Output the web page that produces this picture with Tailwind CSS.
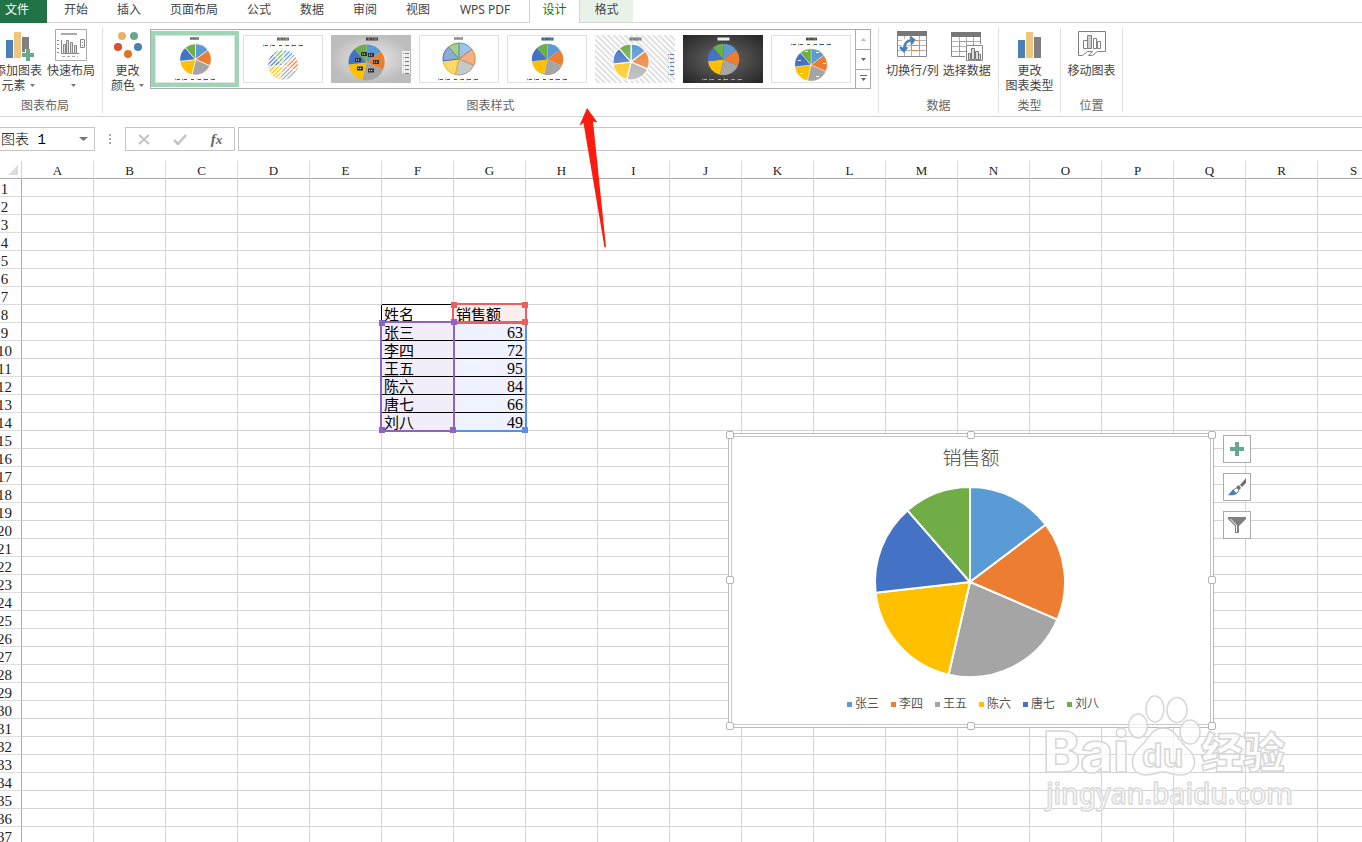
<!DOCTYPE html>
<html lang="zh-CN">
<head>
<meta charset="utf-8">
<title>图表工具</title>
<script src="https://cdn.jsdelivr.net/npm/@tailwindcss/browser@4"></script>
</head>
<body class="bg-white">
<!-- Shared drawing parts -->
<svg class="absolute size-0" aria-hidden="true">
  <defs>
    <symbol id="pie" viewBox="-100 -100 200 200">
      <path fill="#5b9bd5" d="M0 0V-95A95 95 0 0 1 75.7-57.3Z"/>
      <path fill="#ed7d31" d="M0 0L75.7-57.3A95 95 0 0 1 87.3 37.6Z"/>
      <path fill="#a5a5a5" d="M0 0L87.3 37.6A95 95 0 0 1-21.4 92.6Z"/>
      <path fill="#ffc000" d="M0 0L-21.4 92.6A95 95 0 0 1-94.4 10.8Z"/>
      <path fill="#4472c4" d="M0 0L-94.4 10.8A95 95 0 0 1-62.5-71.6Z"/>
      <path fill="#70ad47" d="M0 0L-62.5-71.6A95 95 0 0 1 0-95Z"/>
    </symbol>
    <symbol id="title" viewBox="0 0 12 4"><path d="M0 2h12" stroke-width="3"/><path d="M2 2h2M6 2h1M8 2h3" stroke="#fff" stroke-opacity=".45" stroke-width="1"/></symbol>
    <symbol id="legend" viewBox="0 0 42 3">
      <path d="M2 1.500h3M9 1.500h3M16 1.500h3M23 1.500h3M30 1.500h3M37 1.500h3" stroke-width="1.200"/>
      <path d="M0 1.500h1.500" stroke="#5b9bd5" stroke-width="1.500"/><path d="M7 1.500h1.500" stroke="#ed7d31" stroke-width="1.500"/><path d="M21.500 1.500h1.500" stroke="#ffc000" stroke-width="1.500"/><path d="M28.500 1.500h1.500" stroke="#4472c4" stroke-width="1.500"/><path d="M35.500 1.500h1.500" stroke="#70ad47" stroke-width="1.500"/>
    </symbol>
    <symbol id="vlegend" viewBox="0 0 6 24"><path d="M2 2.500h4M2 6.500h4M2 10.500h4M2 14.500h4M2 18.500h4M2 22.500h4" stroke="#5f7ba5"/><path d="M0 2.500h1M0 14.500h1" stroke="#5b9bd5"/><path d="M0 6.500h1" stroke="#ed7d31"/><path d="M0 22.500h1" stroke="#70ad47"/></symbol>
    <pattern id="hatch" width="3" height="3" patternUnits="userSpaceOnUse" patternTransform="rotate(45)"><path d="M1 0V3" stroke="#fff" stroke-width="1.800"/></pattern>
    <pattern id="hatchbg" width="4" height="4" patternUnits="userSpaceOnUse" patternTransform="rotate(-45)"><path d="M1 0V4" stroke="#d9d9d9" stroke-width="1.600"/></pattern>
    <radialGradient id="light"><stop offset="0" stop-color="#ececec"/><stop offset="1" stop-color="#bdbdbd"/></radialGradient>
    <radialGradient id="dark" r=".7"><stop offset="0" stop-color="#6a6a6a"/><stop offset="1" stop-color="#242424"/></radialGradient>
    <linearGradient id="gloss" x2="0" y2="1"><stop offset="0" stop-color="#fff" stop-opacity="0"/><stop offset="1" stop-color="#fff" stop-opacity=".35"/></linearGradient>
    <symbol id="bars" viewBox="0 0 24 26"><path fill="#4a80b8" d="M0 8h7v18H0z"/><path fill="#eec77c" d="M8 0h7v26H8z"/><path fill="#808080" d="M16 5h7v21h-7z"/></symbol>
  </defs>
</svg>

<div class="relative flex h-screen flex-col overflow-hidden font-['Noto_Sans','Noto_Sans_CJK_SC',sans-serif] text-xs text-[#444]">

  <nav class="flex h-[23px] shrink-0 leading-4">
    <button class="w-[47px] bg-[#217346] pb-[3px] pl-[5px] text-left text-white">文件</button>
    <div class="flex gap-px border-b border-[#d4d4d4] pl-[3px]">
      <button class="px-[14px] pb-[3px]">开始</button>
      <button class="px-[14px] pb-[3px]">插入</button>
      <button class="px-[14px] pb-[3px]">页面布局</button>
      <button class="px-[14px] pb-[3px]">公式</button>
      <button class="px-[14px] pb-[3px]">数据</button>
      <button class="px-[14px] pb-[3px]">审阅</button>
      <button class="px-[14px] pb-[3px]">视图</button>
      <button class="w-[84px] pr-1 pb-[3px]">WPS PDF</button>
    </div>
    <button class="w-[51px] border-x border-[#d4d4d4] pb-[3px] text-[#0b7a0b]">设计</button>
    <button class="w-[53px] border-b border-[#d4d4d4] bg-[#e8f2e8] pb-[3px]">格式</button>
    <div class="flex-1 border-b border-[#d4d4d4]"></div>
  </nav>

  <section class="flex h-[94px] shrink-0 border-b border-[#d4d4d4] pt-1 pb-[3px] leading-[15px]">
    <div class="flex w-[103px] flex-col justify-between border-r border-[#e1e1e1]">
      <div class="-ml-[6px] flex gap-[5px]">
        <button class="flex w-12 shrink-0 flex-col items-center whitespace-nowrap">
          <svg class="mt-[2px] mb-[2px] ml-1 h-8 w-[30px]" viewBox="0 0 30 32"><path fill="#4a80b8" d="M1 11h7v18H1z"/><path fill="#eec77c" d="M9 3h7v26H9z"/><path fill="#808080" d="M17 8h7v21h-7z"/><path d="M23 20v12M17 26h12" stroke="#fff" stroke-width="6"/><path d="M23 20v12M17 26h12" stroke="#6aa793" stroke-width="4"/></svg>
          <span>添加图表</span>
          <span class="flex items-center gap-1">元素<svg class="h-[3px] w-[5px]" viewBox="0 0 5 3"><path d="M0 0h5L2.500 3z" fill="#777"/></svg></span>
        </button>
        <button class="flex w-12 flex-col items-center whitespace-nowrap">
          <svg class="mt-[2px] mb-[2px] h-8 w-8" viewBox="0 0 32 32" fill="none" stroke="#888"><path stroke="#aaa" d="M.5.5h31v31H.5z"/><path stroke-width="2" stroke="#aaa" d="M6 5h16"/><path d="M6.500 11v14M6 24.500h18"/><path fill="#ddd" d="M8.500 15.500h2v9h-2zM11.500 11.500h2v13h-2zM15.500 13.500h2v11h-2zM19.500 16.500h2v8h-2z"/><path fill="#fff" d="M25.500 10.500h4v8h-4z"/><path d="M2 11.500h2M2 15.500h2M2 19.500h2M2 23.500h2M27 13.500h1M27 16.500h1"/><path stroke="#aaa" stroke-dasharray="3 2" d="M7 27.500h16"/></svg>
          <span>快速布局</span>
          <svg class="mt-[6px] ml-1 h-[3px] w-[5px]" viewBox="0 0 5 3"><path d="M0 0h5L2.500 3z" fill="#777"/></svg>
        </button>
      </div>
      <h2 class="pr-3 text-center text-[#666]">图表布局</h2>
    </div>

    <div class="flex w-[776px] flex-col justify-between border-r border-[#e1e1e1]">
      <div class="flex">
        <button class="flex w-[47px] flex-col items-center pl-[2px]">
          <svg class="mt-[2px] mb-[2px] h-8 w-7" viewBox="0 0 28 32"><circle cx="8" cy="7" r="4" fill="#e9b565"/><circle cx="20" cy="7" r="4" fill="#6aa793"/><circle cx="4" cy="18" r="4" fill="#d35230"/><circle cx="24" cy="18" r="4" fill="#4a80b8"/><circle cx="14" cy="25" r="4" fill="#e3731c"/></svg>
          <span>更改</span>
          <span class="flex items-center gap-1">颜色<svg class="h-[3px] w-[5px]" viewBox="0 0 5 3"><path d="M0 0h5L2.500 3z" fill="#777"/></svg></span>
        </button>
        <div class="mt-[2px] flex h-[60px] border border-[#ababab]">
          <div class="flex items-center">
            <button class="w-[88px] border-4 border-[#9fd5b7]" aria-label="样式 1">
              <svg class="h-12 w-20" viewBox="0 0 80 48"><rect x=".5" y=".5" width="79" height="47" fill="#fff" stroke="#e1e1e1"/><use href="#title" x="35" y="2" width="9" height="3" stroke="#555"/><use href="#pie" x="24" y="8" width="33" height="33" stroke="#fff" stroke-width="4"/><use href="#legend" x="20" y="43" width="42" height="3" stroke="#555"/></svg>
            </button>
            <button class="w-[88px] p-1" aria-label="样式 2">
              <svg class="h-12 w-20" viewBox="0 0 80 48"><rect x=".5" y=".5" width="79" height="47" fill="#fff" stroke="#e1e1e1"/><use href="#title" x="33" y="2" width="14" height="4" stroke="#666"/><use href="#legend" x="20" y="9" width="42" height="3" stroke="#555"/><use href="#pie" x="24" y="14" width="32" height="32" stroke="#fff" stroke-width="4"/><circle cx="40" cy="30" r="16" fill="url(#hatch)"/></svg>
            </button>
            <button class="w-[88px] p-1" aria-label="样式 3">
              <svg class="h-12 w-20" viewBox="0 0 80 48"><path fill="url(#light)" d="M0 0h80v48H0z"/><use href="#title" x="34" y="2" width="14" height="4" stroke="#444"/><use href="#pie" x="16.500" y="8.500" width="38" height="38"/><path d="M30 19h6M37 20h6M24 25h6M42 27h6M26 33.500h6M37 35.500h6" stroke="#333" stroke-width="4"/><path d="M31 19h4M38 20h4M25 25h4M43 27h4M27 33.500h4M38 35.500h4" stroke="#eee" stroke-dasharray="1 1"/><path fill="#eee" d="M71 16h8v23h-8z"/><use href="#vlegend" x="72" y="16" width="6" height="24"/></svg>
            </button>
            <button class="w-[88px] p-1" aria-label="样式 4">
              <svg class="h-12 w-20" viewBox="0 0 80 48"><rect x=".5" y=".5" width="79" height="47" fill="#fff" stroke="#e1e1e1"/><use href="#title" x="35" y="2" width="9" height="3" stroke="#777"/><use href="#pie" x="23" y="7" width="34" height="34" opacity=".6"/><g fill="none"><path stroke="#5b9bd5" d="M40 24V8A16 16 0 0 1 52.800 14.400Z"/><path stroke="#ed7d31" d="M40 24L52.800 14.400A16 16 0 0 1 54.700 30.300Z"/><path stroke="#a5a5a5" d="M40 24L54.700 30.300A16 16 0 0 1 36.400 39.600Z"/><path stroke="#f0b428" d="M40 24L36.400 39.600A16 16 0 0 1 24.100 25.800Z"/><path stroke="#4472c4" d="M40 24L24.100 25.800A16 16 0 0 1 29.500 12Z"/><path stroke="#70ad47" d="M40 24L29.500 12A16 16 0 0 1 40 8Z"/></g><use href="#legend" x="19" y="43" width="42" height="3" stroke="#555"/></svg>
            </button>
            <button class="w-[88px] p-1" aria-label="样式 5">
              <svg class="h-12 w-20" viewBox="0 0 80 48"><rect x=".5" y=".5" width="79" height="47" fill="#fff" stroke="#e1e1e1"/><use href="#title" x="34" y="2" width="13" height="4" stroke="#355a86"/><use href="#pie" x="24" y="8" width="33" height="33"/><use href="#legend" x="20" y="43" width="42" height="3" stroke="#355a86"/></svg>
            </button>
            <button class="w-[88px] p-1" aria-label="样式 6">
              <svg class="h-12 w-20" viewBox="0 0 80 48"><path fill="#fff" d="M0 0h80v48H0z"/><path fill="url(#hatchbg)" d="M0 0h80v48H0z"/><use href="#title" x="34" y="2" width="13" height="4" stroke="#777"/><use href="#pie" x="17" y="8" width="38" height="38" stroke="#fff" stroke-width="6"/><circle cx="36" cy="27" r="18" fill="url(#gloss)"/><use href="#vlegend" x="73" y="17" width="6" height="24"/></svg>
            </button>
            <button class="w-[88px] p-1" aria-label="样式 7">
              <svg class="h-12 w-20" viewBox="0 0 80 48"><path fill="url(#dark)" d="M0 0h80v48H0z"/><use href="#title" x="34" y="2" width="13" height="4" stroke="#eee"/><use href="#pie" x="24" y="8" width="33" height="33"/><use href="#legend" x="19" y="43" width="42" height="3" stroke="#aaa"/></svg>
            </button>
            <button class="w-[88px] p-1" aria-label="样式 8">
              <svg class="h-12 w-20" viewBox="0 0 80 48"><rect x=".5" y=".5" width="79" height="47" fill="#fff" stroke="#e1e1e1"/><use href="#title" x="35" y="2" width="11" height="4" stroke="#444"/><use href="#legend" x="20" y="8" width="42" height="3" stroke="#355a86"/><use href="#pie" x="23" y="13" width="34" height="34" stroke="#fff" stroke-width="2"/><path d="M45 17.500h3M52 28.500h3M45 41.500h3M29 38.500h3M27 25.500h3M34 16.500h3" stroke="#fff" stroke-width="1"/></svg>
            </button>
          </div>
          <div class="flex w-[15px] flex-col divide-y divide-[#ababab] border-l border-[#ababab]">
            <button class="flex h-5 items-center justify-center" aria-label="上一行"><svg class="h-[3px] w-[5px]" viewBox="0 0 5 3"><path d="M0 3h5L2.500 0z" fill="#bbb"/></svg></button>
            <button class="flex flex-1 items-center justify-center" aria-label="下一行"><svg class="h-[3px] w-[5px]" viewBox="0 0 5 3"><path d="M0 0h5L2.500 3z" fill="#666"/></svg></button>
            <button class="flex flex-1 items-center justify-center" aria-label="其他样式"><svg class="h-[7px] w-[7px]" viewBox="0 0 7 7"><path d="M0 0h7v1H0zM1 3h5L3.500 6z" fill="#666"/></svg></button>
          </div>
        </div>
      </div>
      <h2 class="text-center text-[#666]">图表样式</h2>
    </div>

    <div class="flex w-[120px] flex-col justify-between border-r border-[#e1e1e1]">
      <div class="flex justify-center gap-1 whitespace-nowrap">
        <button class="flex flex-col items-center">
          <svg class="mt-[2px] mb-[2px] h-8 w-[30px]" viewBox="0 0 30 32" fill="none"><path stroke="#b5b5b5" d="M1 11.500h28M1 16.500h28M1 21.500h28M7.500 6v21M14.500 6v21M22.500 6v21"/><path fill="#777" d="M0 2h30v5H0z"/><path stroke="#888" d="M.5 6v21.500h29V6"/><path stroke="#e08a4a" d="M14.500 11.500h8v10h-8zM14.500 16.500h8"/><path fill="#fff" d="M5 10h9l-8 9H4z"/><path stroke="#4a80b8" stroke-width="2.500" d="M7 21C7 14 10 11 17 11M13 8l4 3-3 4M3 18l4 4 3-4"/></svg>
          <span>切换行/列</span>
        </button>
        <button class="flex flex-col items-center">
          <svg class="mt-[2px] mb-[2px] h-8 w-8" viewBox="0 0 32 32" fill="none"><path stroke="#b5b5b5" d="M1 12.500h28M1 17.500h28M1 22.500h20M8.500 7v20M15.500 7v20M22.500 7v12"/><path fill="#777" d="M0 3h30v5H0z"/><path stroke="#888" d="M.5 7v20.500H14M29.500 7v8"/><path stroke="#e08a4a" d="M22.500 16v-3.500h-14v10H15"/><path fill="#fff" stroke="#888" d="M15.500 16.500h16v15h-16z"/><path fill="#ddd" stroke="#777" d="M17.500 24.500h2v6h-2zM20.500 19.500h3v11h-3zM24.500 22.500h3v8h-3zM27.500 25.500h2v5h-2z"/></svg>
          <span>选择数据</span>
        </button>
      </div>
      <h2 class="text-center text-[#666]">数据</h2>
    </div>

    <div class="flex w-[62px] flex-col justify-between border-r border-[#e1e1e1]">
      <button class="flex flex-col items-center">
        <svg class="mt-[5px] mb-[5px] h-[26px] w-6"><use href="#bars"/></svg>
        <span>更改</span><span>图表类型</span>
      </button>
      <h2 class="text-center text-[#666]">类型</h2>
    </div>

    <div class="flex w-[62px] flex-col justify-between border-r border-[#e1e1e1]">
      <button class="flex flex-col items-center">
        <svg class="mt-[2px] mb-[2px] h-8 w-7" viewBox="0 0 28 32" fill="none" stroke="#808080"><path d="M.5 2.500h27v20h-8l-5 4h-4l4-4h-5l-5 4h-4z" fill="#fff"/><path d="M5.500 11.500h4v8h-4zM15.500 9.500h3v10h-3zM19.500 12.500h3v7h-3z"/><path fill="#ccc" d="M9.500 6.500h4v13h-4z"/></svg>
        <span>移动图表</span>
      </button>
      <h2 class="text-center text-[#666]">位置</h2>
    </div>
  </section>

  <section class="flex h-11 shrink-0 items-center font-['Liberation_Mono','Noto_Sans_CJK_SC',monospace]">
    <div class="flex h-6 w-[95px] items-center border border-l-0 border-[#c6c6c6]">
      <input class="w-[79px] pt-px pl-px text-sm font-light text-black outline-none" value="图表 1" aria-label="名称框">
      <button aria-label="名称列表"><svg class="h-1 w-[9px]" viewBox="0 0 9 4"><path d="M0 0h9L4.500 4z" fill="#777"/></svg></button>
    </div>
    <svg class="mx-[13px] h-3 w-1" viewBox="0 0 4 12"><path d="M1 1h2v2H1zM1 5h2v2H1zM1 9h2v2H1z" fill="#aaa"/></svg>
    <div class="flex h-6 w-[110px] items-center justify-around border border-[#c6c6c6]">
      <button aria-label="取消"><svg class="h-3 w-3" viewBox="0 0 12 12"><path d="M1 2l10 9M11 2L1 11" stroke="#c3c3c3" stroke-width="2"/></svg></button>
      <button aria-label="输入"><svg class="h-3 w-[14px]" viewBox="0 0 14 12"><path d="M1 7l4 4L13 2" fill="none" stroke="#c3c3c3" stroke-width="2.500"/></svg></button>
      <button class="font-['Liberation_Serif',serif] text-[15px] leading-4 font-bold text-[#666] italic" aria-label="插入函数">f<span class="text-[13px]">x</span></button>
    </div>
    <input class="ml-[3px] h-6 min-w-0 flex-1 border border-r-0 border-[#c6c6c6] px-1 outline-none" aria-label="编辑栏">
  </section>

  <main class="relative min-h-0 flex-1 overflow-hidden">
    <table class="-ml-3 w-[1402px] table-fixed border-separate border-spacing-0 font-['Liberation_Serif','Noto_Sans_CJK_SC',serif] text-[15px] leading-4 text-black">
      <colgroup id="cols"><col class="w-[34px]"></colgroup>
      <thead><tr id="head" class="h-[18px]"><th class="border-b border-b-[#ababab] border-r border-r-[#d4d4d4] p-0"><svg class="ml-auto mr-[3px] h-[10px] w-[10px]" viewBox="0 0 10 10"><path d="M10 0v10H0z" fill="#dcdcdc"/></svg></th></tr></thead>
      <tbody id="rows"></tbody>
    </table>

    <!-- Colour-coded source ranges -->
    <div class="pointer-events-none absolute top-[160px] left-[453px] h-[111px] w-[74px] border-2 border-[#5b8def]"><i class="absolute -right-[3px] -bottom-[3px] size-[6px] bg-[#5b8def]"></i></div>
    <div class="pointer-events-none absolute top-[160px] left-[380px] h-[111px] w-[75px] border-2 border-[#8e63c4]">
      <i class="absolute -top-[3px] -left-[3px] size-[6px] bg-[#8e63c4]"></i><i class="absolute -bottom-[3px] -left-[3px] size-[6px] bg-[#8e63c4]"></i><i class="absolute -right-[3px] -bottom-[3px] size-[6px] bg-[#8e63c4]"></i>
    </div>
    <div class="pointer-events-none absolute top-[142px] left-[452px] h-[21px] w-[75px] border-2 border-[#ea5f60]">
      <i class="absolute -top-[3px] -left-[3px] size-[6px] bg-[#ea5f60]"></i><i class="absolute -top-[3px] -right-[3px] size-[6px] bg-[#ea5f60]"></i><i class="absolute -right-[3px] -bottom-[3px] size-[6px] bg-[#ea5f60]"></i><i class="absolute -bottom-[3px] -left-[3px] size-[6px] bg-[#8e63c4]"></i>
    </div>

    <!-- Floating chart object -->
    <figure class="absolute top-[272px] left-[728px] h-[295px] w-[486px] border border-[#bababa] bg-white p-[2px]">
      <div class="flex h-full flex-col items-center border border-[#c8c8c8]">
        <figcaption class="mt-2 font-['Noto_Sans_CJK_SC',sans-serif] text-[19px] leading-6 font-light text-[#444]">销售额</figcaption>
        <svg class="mt-[13px] mr-[2px] h-[200px] w-[200px]" role="img" aria-label="销售额饼图"><use href="#pie" stroke="#fff" stroke-width="2" stroke-linejoin="round"/></svg>
        <ul class="mt-[14px] flex gap-3 pl-1 text-xs leading-4 text-[#555]">
          <li class="flex items-center gap-[3px]"><i class="size-[5px] bg-[#5b9bd5]"></i>张三</li>
          <li class="flex items-center gap-[3px]"><i class="size-[5px] bg-[#ed7d31]"></i>李四</li>
          <li class="flex items-center gap-[3px]"><i class="size-[5px] bg-[#a5a5a5]"></i>王五</li>
          <li class="flex items-center gap-[3px]"><i class="size-[5px] bg-[#ffc000]"></i>陈六</li>
          <li class="flex items-center gap-[3px]"><i class="size-[5px] bg-[#4472c4]"></i>唐七</li>
          <li class="flex items-center gap-[3px]"><i class="size-[5px] bg-[#70ad47]"></i>刘八</li>
        </ul>
      </div>
      <i class="absolute -top-[3px] -left-[3px] size-2 rounded-xs border border-[#b5b5b5] bg-white"></i>
      <i class="absolute -top-[3px] left-[238px] size-2 rounded-xs border border-[#b5b5b5] bg-white"></i>
      <i class="absolute -top-[3px] -right-[3px] size-2 rounded-xs border border-[#b5b5b5] bg-white"></i>
      <i class="absolute top-[142px] -left-[3px] size-2 rounded-xs border border-[#b5b5b5] bg-white"></i>
      <i class="absolute top-[142px] -right-[3px] size-2 rounded-xs border border-[#b5b5b5] bg-white"></i>
      <i class="absolute -bottom-[3px] -left-[3px] size-2 rounded-xs border border-[#b5b5b5] bg-white"></i>
      <i class="absolute -bottom-[3px] left-[238px] size-2 rounded-xs border border-[#b5b5b5] bg-white"></i>
      <i class="absolute -right-[3px] -bottom-[3px] size-2 rounded-xs border border-[#b5b5b5] bg-white"></i>
    </figure>
    <div class="absolute top-[274px] left-[1223px] flex flex-col gap-[10px]">
      <button class="flex size-7 items-center justify-center border border-[#ababab] bg-white" aria-label="图表元素"><svg class="size-[14px]" viewBox="0 0 14 14"><path d="M7 0v14M0 7h14" stroke="#6aa793" stroke-width="4"/></svg></button>
      <button class="flex size-7 items-center justify-center border border-[#ababab] bg-white" aria-label="图表样式"><svg class="h-[18px] w-[18px]" viewBox="0 0 18 18"><path fill="#707070" d="M18 0v5l-4 4-2-2zM11 7l2 3-2 2-3-3z"/><path fill="#fff" stroke="#4a80b8" d="M7.500 10.500c2-1 4 1 2.500 3.500l-2 2-4-3z"/><path fill="#4a80b8" d="M5 11.500l4 4C6 17.500 3 17.500 0 17z"/></svg></button>
      <button class="flex size-7 items-center justify-center border border-[#ababab] bg-white" aria-label="图表筛选器"><svg class="h-[18px] w-[18px]" viewBox="0 0 18 18"><path fill="#808080" d="M0 1h18v2l-7 7v7H7v-7L0 3z"/><path fill="none" stroke="#fff" d="M2.500 3l6 6.500V16"/></svg></button>
    </div>

    <!-- Site watermark -->
    <svg class="pointer-events-none absolute top-[529px] left-[1040px] h-[130px] w-[260px]" viewBox="0 0 260 130" fill="#fff" fill-opacity=".7" stroke="#d6d6d6" stroke-width="1.500">
      <text x="3" y="82" font-family="Inter" font-weight="800" font-size="56">Bai</text>
      <text x="161" y="78" font-family="Noto Sans CJK SC" font-weight="900" font-size="42">经验</text>
      <ellipse cx="98" cy="36" rx="9.500" ry="12"/><ellipse cx="115" cy="19" rx="9" ry="13"/><ellipse cx="137" cy="20" rx="10" ry="12.500"/><ellipse cx="150" cy="42" rx="10" ry="12"/>
      <path d="M123 38c12 0 14 11 23 19 14 11 10 28-6 28-8 0-11-3-17-3s-9 3-17 3c-16 0-18-18-5-29 9-8 10-18 22-18z"/>
      <text x="102" y="77" font-family="Liberation Sans" font-weight="bold" font-size="34">du</text>
      <text x="6" y="114" font-family="Noto Sans" font-weight="500" font-size="28" stroke="#dadada">jingyan.baidu.com</text>
    </svg>
  </main>

  <svg class="pointer-events-none absolute top-[108px] left-[578px] h-[142px] w-[32px]" viewBox="0 0 32 142"><path fill="#fb1c10" d="M9 0L19.500 14.500L15 13.500L28 139L26.500 139.500L5.500 15L1.500 17.500z"/></svg>
</div>

<script>
  const cols = "ABCDEFGHIJKLMNOPQRS".split("");
  const data = { 8: ["姓名", "销售额"], 9: ["张三", 63], 10: ["李四", 72], 11: ["王五", 95], 12: ["陈六", 84], 13: ["唐七", 66], 14: ["刘八", 49] };
  const plain = "border-r border-b border-[#d4d4d4] p-0";
  const style = (r, c) => {
    if (r === 7 && c === "F") return "border-r border-r-[#d4d4d4] border-b border-b-black p-0";
    if (r === 8 && c === "E") return "border-r border-r-black border-b border-b-[#d4d4d4] p-0";
    if (!data[r]) return plain;
    if (c === "F") return r === 8 ? "border-r border-b border-black pl-[2px] text-left whitespace-nowrap" : "border-r border-b border-black bg-[#f2eef9] pl-[2px] text-left whitespace-nowrap";
    if (c === "G") return r === 8 ? "border-r border-b border-black bg-[#fdeeee] pl-[2px] text-left whitespace-nowrap" : "border-r border-b border-black bg-[#eef3ff] pr-[2px] text-right text-base";
    return plain;
  };
  for (const c of cols) {
    document.getElementById("cols").insertAdjacentHTML("beforeend", '<col class="w-[72px]">');
    document.getElementById("head").insertAdjacentHTML("beforeend", `<th scope="col" class="border-r border-b border-r-[#dcdcdc] border-b-[#ababab] p-0 text-[13px] font-normal text-[#222]"><div class="h-[17px] leading-5">${c}</div></th>`);
  }
  let html = "";
  for (let r = 1; r <= 38; r++) {
    html += `<tr class="h-[18px]"><th scope="row" class="border-r border-b border-r-[#ababab] border-b-[#dcdcdc] p-0 font-normal text-[#222]"><div class="h-[17px] leading-5">${r}</div></th>`;
    for (const c of cols) {
      const v = data[r] ? (c === "F" ? data[r][0] : c === "G" ? data[r][1] : "") : "";
      html += `<td class="${style(r, c)}"><div class="h-[17px] leading-5">${v}</div></td>`;
    }
    html += "</tr>";
  }
  document.getElementById("rows").innerHTML = html;
</script>
</body>
</html>
